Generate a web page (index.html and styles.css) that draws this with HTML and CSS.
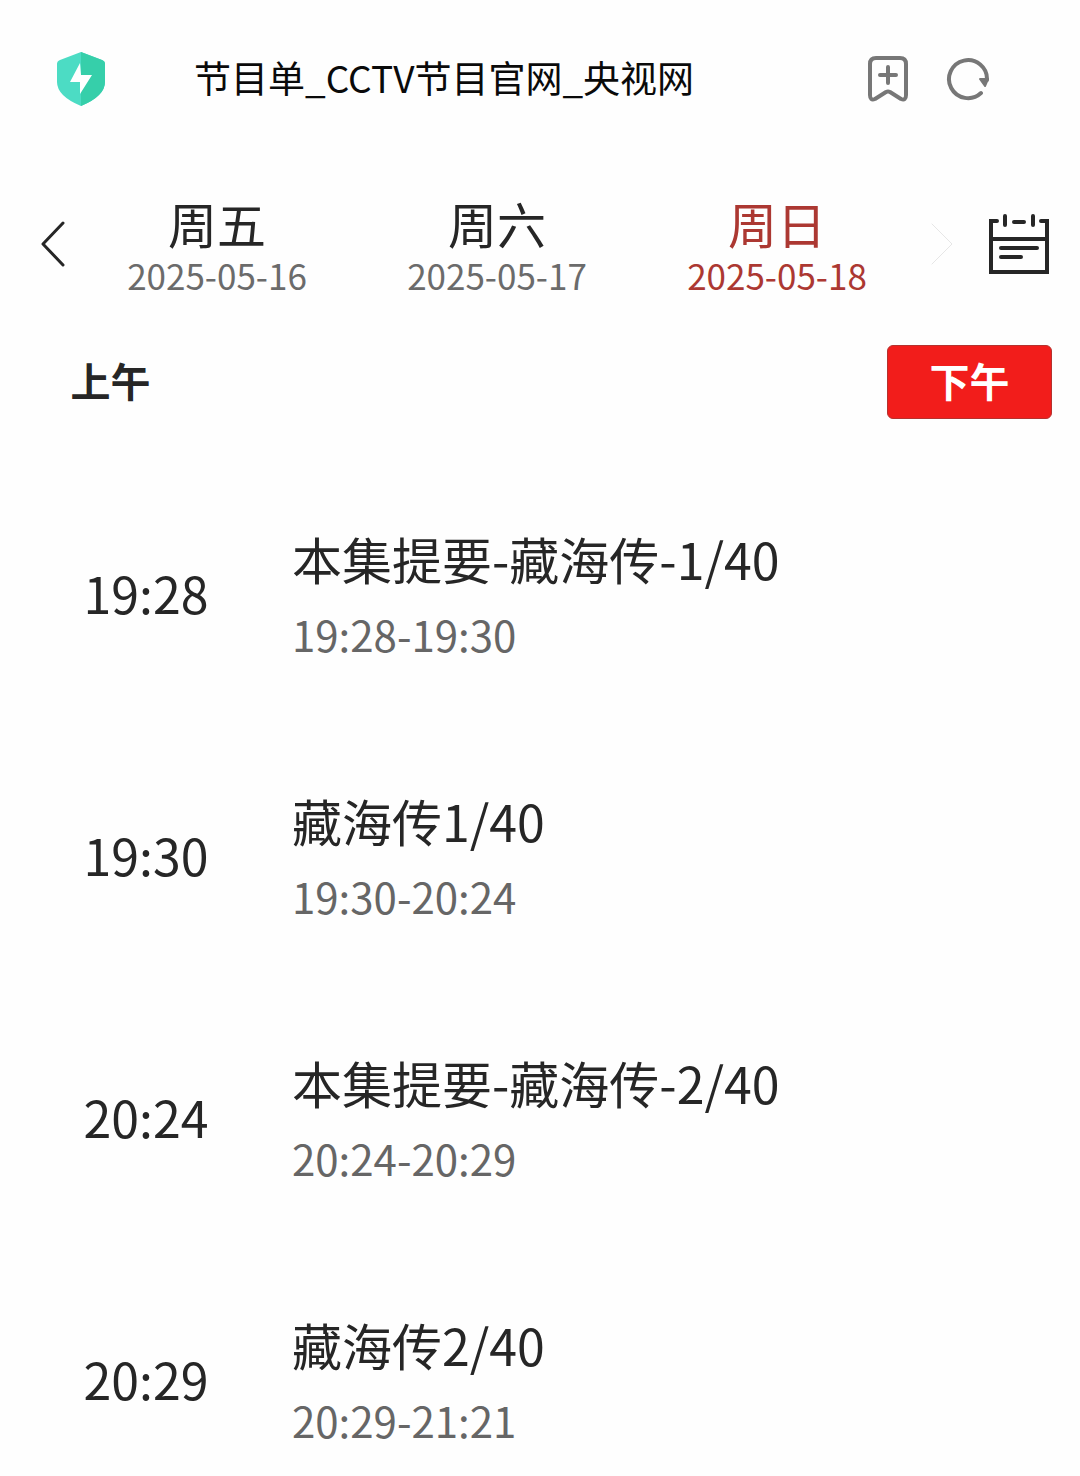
FILE: index.html
```
<!DOCTYPE html>
<html lang="zh-CN">
<head>
    <meta charset="UTF-8">
    <meta name="viewport" content="width=device-width, initial-scale=1.0">
    <title>节目单_CCTV节目官网_央视网</title>
    <link rel="stylesheet" href="styles.css">
</head>
<body>

<header class="top-bar">
    <svg class="shield" viewBox="0 0 50 56" aria-hidden="true">
        <path fill="#4cdcc4" d="M25 1 46 9Q49 10 49 13V31Q49 45 25 55Q1 45 1 31V13Q1 10 4 9Z"/>
        <path fill="#36cfaa" d="M25 1 46 9Q49 10 49 13V31Q49 45 25 55Z"/>
        <path fill="#fff" d="M24 12 14 31H24V43L36 24H25Z"/>
    </svg>
    <h1 class="page-title">节目单_CCTV节目官网_央视网</h1>
    <button type="button" class="icon-btn" aria-label="添加书签">
        <svg class="bar-icon" viewBox="0 0 44 48">
            <path d="M10 3H34Q40 3 40 9V40Q40 46 35 44L24 37Q22 36 20 37L9 44Q4 46 4 40V9Q4 3 10 3Z"/>
            <path d="M22 12V28M14 20H30"/>
        </svg>
    </button>
    <button type="button" class="icon-btn" aria-label="刷新">
        <svg class="bar-icon" viewBox="0 0 44 48">
            <path d="M35 38A19 19 0 1 1 41 25"/>
            <path class="arrow-head" d="M34 24H42L39 31Z"/>
        </svg>
    </button>
</header>

<nav class="date-nav">
    <button type="button" class="prev-btn" aria-label="前一天">
        <svg viewBox="0 0 26 46"><path d="M23 2 3 23 23 44"/></svg>
    </button>
    <div class="days">
        <button type="button" class="day"><span class="week">周五</span><span class="date">2025-05-16</span></button>
        <button type="button" class="day"><span class="week">周六</span><span class="date">2025-05-17</span></button>
        <button type="button" class="day active"><span class="week">周日</span><span class="date">2025-05-18</span></button>
    </div>
    <button type="button" class="next-btn" aria-label="后一天">
        <svg viewBox="0 0 22 42"><path d="M1 1 21 21 1 41"/></svg>
    </button>
    <button type="button" class="calendar-btn" aria-label="选择日期">
        <svg viewBox="0 0 62 62">
            <path class="frame" d="M9 8H3V59H59V8H53M3 26H59"/>
            <path d="M17 3V12M45 3V12M26 9H36M13 35H49M13 44H33"/>
        </svg>
    </button>
</nav>

<div class="period">
    <button type="button" class="period-btn">上午</button>
    <button type="button" class="period-btn selected">下午</button>
</div>

<main class="programs">
    <div class="program">
        <div class="time">19:28</div>
        <div class="info">
            <h2>本集提要-藏海传-1/40</h2>
            <p>19:28-19:30</p>
        </div>
    </div>
    <div class="program">
        <div class="time">19:30</div>
        <div class="info">
            <h2>藏海传1/40</h2>
            <p>19:30-20:24</p>
        </div>
    </div>
    <div class="program">
        <div class="time">20:24</div>
        <div class="info">
            <h2>本集提要-藏海传-2/40</h2>
            <p>20:24-20:29</p>
        </div>
    </div>
    <div class="program">
        <div class="time">20:29</div>
        <div class="info">
            <h2>藏海传2/40</h2>
            <p>20:29-21:21</p>
        </div>
    </div>
</main>

</body>
</html>
```
FILE: styles.css
```
* {
    box-sizing: border-box;
}
body {
    margin: 0;
    background: #fefefe;
    color: #262626;
    font-family: "Noto Sans CJK SC", sans-serif;
}
h1, h2, p {
    margin: 0;
    font-weight: 400;
}
button {
    padding: 0;
    border: none;
    background: none;
    color: inherit;
    font-family: inherit;
    cursor: pointer;
}
svg {
    display: block;
    fill: none;
    stroke: #262626;
    stroke-linecap: round;
    stroke-linejoin: round;
}

/* Top bar */
.top-bar {
    display: flex;
    align-items: center;
    height: 158px;
    padding: 0 90px 0 56px;
}
.shield {
    width: 50px;
    height: 56px;
    stroke: none;
}
.page-title {
    flex: 1;
    margin-left: 88px;
    padding-bottom: 4px;
    color: #0a0a0a;
    font-size: 37px;
    line-height: 48px;
}
.icon-btn {
    margin-left: 36px;
}
.bar-icon {
    width: 44px;
    height: 48px;
    stroke: #777;
    stroke-width: 4;
}
.arrow-head {
    fill: #777;
    stroke-width: 2;
}

/* Date picker */
.date-nav {
    display: flex;
    align-items: center;
    height: 172px;
    padding: 0 30px 0 40px;
}
.prev-btn {
    width: 37px;
}
.prev-btn svg {
    width: 26px;
    height: 46px;
    stroke-width: 3;
}
.days {
    display: flex;
    flex: 1;
}
.day {
    flex: 1;
    color: #262626;
}
.week {
    display: block;
    font-size: 49px;
    line-height: 62px;
}
.date {
    display: block;
    color: #6b6b6b;
    font-size: 35px;
    line-height: 42px;
}
.active .week, .active .date {
    color: #ac3832;
}
.next-btn {
    width: 50px;
}
.next-btn svg {
    width: 22px;
    height: 42px;
    margin: 0 auto;
    stroke: #e6e6e6;
    stroke-width: 1;
}
.calendar-btn {
    margin-left: 21px;
}
.calendar-btn svg {
    width: 62px;
    height: 62px;
    stroke-width: 4;
}
.frame {
    stroke-linejoin: miter;
}

/* Morning / afternoon switch */
.period {
    display: flex;
    justify-content: space-between;
    padding: 15px 28px 0;
}
.period-btn {
    width: 165px;
    height: 74px;
    padding-bottom: 4px;
    border-radius: 6px;
    font-size: 40px;
    font-weight: 700;
}
.selected {
    border: 1px solid #b5322e;
    background: #f21d1b;
    color: #fff;
}

/* Program list */
.programs {
    padding-top: 42px;
}
.program {
    display: flex;
    align-items: center;
    height: 262px;
}
.time {
    width: 292px;
    text-align: center;
    font-size: 50px;
}
.info {
    flex: 1;
}
.info h2 {
    font-size: 50px;
    line-height: 84px;
}
.info p {
    color: #666;
    font-size: 42px;
    line-height: 68px;
}
```
